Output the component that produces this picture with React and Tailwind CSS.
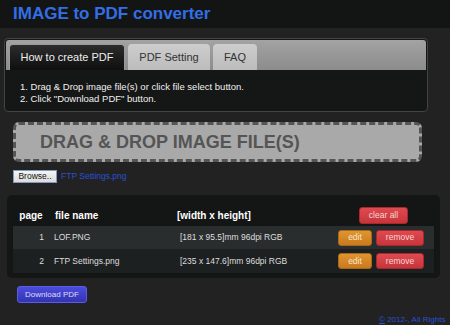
import { useState } from "react";

const files = [
  { page: 1, name: "LOF.PNG", size: "[181 x 95.5]mm 96dpi RGB" },
  { page: 2, name: "FTP Settings.png", size: "[235 x 147.6]mm 96dpi RGB" },
];

const tabs = [
  { label: "How to create PDF", width: "w-[116px]" },
  { label: "PDF Setting", width: "w-[82px]" },
  { label: "FAQ", width: "w-[44px]" },
];

function App() {
  const [activeTab, setActiveTab] = useState(0);

  return (
    <div className="min-h-[325px] w-full overflow-hidden bg-[#222222] font-['Liberation_Sans',Arial,sans-serif]">
      <header className="h-[28px] bg-[#131515] pl-[13px] pt-[5px]">
        <h1 className="text-[17px] leading-[17px] font-bold text-[#336ee6]">
          IMAGE to PDF converter
        </h1>
      </header>

      <div className="ml-[4px] mt-[10px] w-[424px] rounded-[4px] border border-[#444444] bg-[#151616] p-[1px]">
        <div className="flex h-[30px] gap-[3px] rounded-t-[3px] bg-linear-to-b from-[#a3a3a3] to-[#8c8c8c] pl-[3px] pt-[4px]">
          {tabs.map((tab, index) => (
            <button
              key={tab.label}
              onClick={() => setActiveTab(index)}
              className={`${tab.width} h-[26px] rounded-t-[4px] text-[11px] leading-none ${
                index === activeTab
                  ? "border border-b-0 border-[#9a9a9a] bg-linear-to-b from-[#2c2c2c] to-[#0f0f0f] text-[#eeeeee]"
                  : "bg-linear-to-b from-[#cdcdcd] to-[#bcbcbc] text-[#333333]"
              }`}
            >
              {tab.label}
            </button>
          ))}
        </div>
        <div className="pb-[5px] pl-[14px] pt-[11px] text-[9.5px] leading-[12px] text-[#f0f0f0]">
          <p>1. Drag &amp; Drop image file(s) or click file select button.</p>
          <p>2. Click "Download PDF" button.</p>
        </div>
      </div>

      <div className="ml-[13px] mt-[10px] flex h-[40px] w-[409px] items-center rounded-[6px] border-[3px] border-dashed border-[#555555] bg-[#a9a9a9] pl-[24px]">
        <span className="text-[18px] font-bold text-[#555555]">
          DRAG &amp; DROP IMAGE FILE(S)
        </span>
      </div>

      <div className="ml-[13px] mt-[8px] flex h-[13px] items-center gap-[4px]">
        <button className="h-[13px] w-[44px] border border-[#7d9cc4] bg-linear-to-b from-[#f4f4f4] to-[#dcdcdc] text-[8.5px] leading-none text-[#111111]">
          Browse..
        </button>
        <span className="text-[8.5px] text-[#2a50d4]">FTP Settings.png</span>
      </div>

      <div className="ml-[7px] mt-[12px] w-[433px] rounded-[5px] bg-[#141616] px-[6px] pb-[5px] pt-[9px]">
        <div className="flex h-[22px] items-center text-[10px] font-bold text-white">
          <div className="w-[36px] text-center">page</div>
          <div className="w-[125px] pl-[6px]">file name</div>
          <div className="w-[164px] pl-[3px]">[width x height]</div>
          <div className="pl-[21px]">
            <button className="h-[17px] w-[49px] rounded-[3px] border border-[#a8282e] bg-linear-to-b from-[#df4a50] to-[#c7353b] text-[8.5px] font-normal leading-none text-[#f6d6d6]">
              clear all
            </button>
          </div>
        </div>

        {files.map((file, index) => (
          <div
            key={file.page}
            className={`flex items-center text-[8.5px] text-[#dddddd] ${
              index === 0 ? "h-[23px] bg-[#2a2d2e]" : "h-[24px] bg-[#1d2021]"
            }`}
          >
            <div className="w-[36px] pr-[5px] text-right">{file.page}</div>
            <div className="w-[125px] pl-[5px]">{file.name}</div>
            <div className="w-[164px] pl-[6px]">{file.size}</div>
            <div className="flex gap-[4px]">
              <button className="h-[16px] w-[34px] rounded-[3px] border border-[#a8681c] bg-linear-to-b from-[#e0952f] to-[#c97a1e] leading-none text-[#f8e6cc]">
                edit
              </button>
              <button className="h-[16px] w-[48px] rounded-[3px] border border-[#a8282e] bg-linear-to-b from-[#df4a50] to-[#c7353b] leading-none text-[#f6d6d6]">
                remove
              </button>
            </div>
          </div>
        ))}
      </div>

      <button className="ml-[17px] mt-[8px] h-[17px] w-[70px] rounded-[3px] border border-[#5c5ce6] bg-linear-to-b from-[#4c4cdc] to-[#3333b4] text-[8px] leading-none text-[#dcdcf4]">
        Download PDF
      </button>

      <div className="mt-[11px] whitespace-nowrap pl-[379px] text-[8px] leading-[10px] text-[#2a50d4]">
        <span className="underline">©</span> 2012-, All Rights
      </div>
    </div>
  );
}

export default App;
